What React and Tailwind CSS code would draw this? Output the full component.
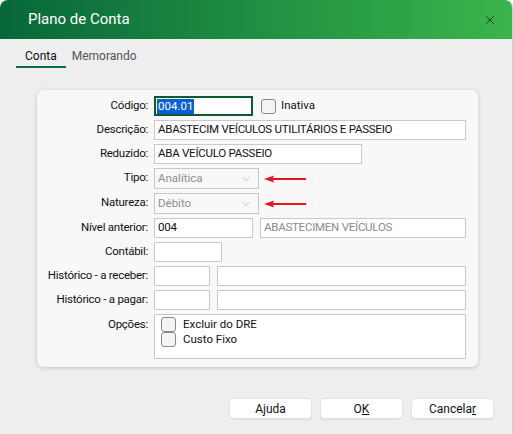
import React from 'react';
import { X, ChevronDown } from 'lucide-react';

const font = { fontFamily: 'Roboto, "Noto Sans", sans-serif' };

const Field = ({ className = '', children, gray }) => (
    <div className={`h-[20px] border border-[#c8c8c8] bg-white flex items-center px-[3px] text-[11.5px] tracking-[-0.25px] whitespace-nowrap overflow-hidden ${gray ? 'text-[#8a8a8a]' : 'text-[#111]'} ${className}`}>
        {children}
    </div>
);

const Check = () => (
    <div className="w-[15px] h-[15px] rounded-[3px] border border-[#8a8a8a] bg-[#f4f4f4] shrink-0" />
);

const Arrow = () => (
    <svg width="44" height="8" viewBox="0 0 44 8" className="ml-[5px]">
        <path d="M0 4 L10 0.5 L9 3 L42 3 L42 5 L9 5 L10 7.5 Z" fill="#e8141c" />
    </svg>
);

const Select = ({ value }) => (
    <div className="flex items-center">
        <div className="w-[105px] h-[21px] border border-[#c8c8c8] bg-[#f8f8f8] flex items-center justify-between px-[3px] text-[11.5px] text-[#8f8f8f]">
            <span>{value}</span>
            <ChevronDown size={12} strokeWidth={1.2} className="text-[#a0a0a0] mr-[3px]" />
        </div>
        <Arrow />
    </div>
);

const Label = ({ children }) => (
    <div className="h-[20px] flex items-center justify-end text-[11.5px] tracking-[-0.25px] text-[#111] whitespace-nowrap">{children}</div>
);

export default function App() {
    return (
        <div style={font} className="w-[513px] h-[434px] bg-[#eeeeee] rounded-t-[8px] overflow-hidden border-r border-[#cfcfcf] flex flex-col">
            {/* title bar */}
            <div className="h-[39px] shrink-0 bg-gradient-to-r from-[#08673a] via-[#1f8f42] to-[#3bb54a] flex items-center justify-between pl-[28px] pr-[15px]">
                <span className="text-white text-[15px]">Plano de Conta</span>
                <X size={14} strokeWidth={1.3} className="text-[#1b1b1b]" />
            </div>

            {/* tabs */}
            <div className="flex items-end pl-[16px] h-[29px] text-[12px]">
                <div className="px-[9px] pb-[1px] border-b-2 border-[#0b6b3a] text-[#111]">Conta</div>
                <div className="px-[6px] pb-[3px] text-[#555]">Memorando</div>
            </div>

            {/* panel */}
            <div className="ml-[37px] mt-[22px] w-[441px] h-[277px] bg-[#f8f8f8] rounded-[7px] shadow-[0_1px_4px_rgba(0,0,0,0.18)] pt-[6px]">
                <div className="grid grid-cols-[111px_312px] gap-x-[6px] gap-y-[4px]">
                    <Label>Código:</Label>
                    <div className="flex items-center">
                        <div className="w-[99px] h-[20px] border-2 border-[#0b5a30] bg-white flex items-center px-[1px] text-[11.5px]">
                            <span className="bg-[#0a5fd6] text-white leading-[15px] px-[1px]">004.01</span>
                        </div>
                        <div className="ml-[8px]"><Check /></div>
                        <span className="ml-[5px] text-[11.5px] text-[#111]">Inativa</span>
                    </div>

                    <Label>Descrição:</Label>
                    <Field className="w-[312px]">ABASTECIM VEÍCULOS UTILITÁRIOS E PASSEIO</Field>

                    <Label>Reduzido:</Label>
                    <Field className="w-[208px]">ABA VEÍCULO PASSEIO</Field>

                    <Label>Tipo:</Label>
                    <Select value="Analítica" />

                    <Label>Natureza:</Label>
                    <Select value="Débito" />

                    <Label>Nível anterior:</Label>
                    <div className="flex gap-[7px]">
                        <Field className="w-[99px]">004</Field>
                        <Field className="w-[206px]" gray>ABASTECIMEN VEÍCULOS</Field>
                    </div>

                    <Label>Contábil:</Label>
                    <Field className="w-[68px]" />

                    <Label>Histórico - a receber:</Label>
                    <div className="flex gap-[7px]">
                        <Field className="w-[56px]" />
                        <Field className="w-[249px]" />
                    </div>

                    <Label>Histórico - a pagar:</Label>
                    <div className="flex gap-[7px]">
                        <Field className="w-[56px]" />
                        <Field className="w-[249px]" />
                    </div>

                    <div className="flex justify-end text-[11.5px] tracking-[-0.25px] text-[#111] pt-[2px]">Opções:</div>
                    <div className="w-[312px] h-[45px] border border-[#c8c8c8] bg-white pl-[6px] pt-[2px] text-[11.5px] leading-[15px] text-[#111]">
                        <div className="flex items-center gap-[7px] h-[15px]"><Check /><span>Excluir do DRE</span></div>
                        <div className="flex items-center gap-[7px] h-[15px]"><Check /><span>Custo Fixo</span></div>
                    </div>
                </div>
            </div>

            {/* buttons */}
            <div className="flex justify-end gap-[8px] pr-[18px] mt-[31px]">
                {[['Ajuda', null], ['O', 'K'], ['Cancela', 'r']].map(([a, u]) => (
                    <button key={a} className="w-[83px] h-[21px] bg-white rounded-[4px] border border-[#e2e2e2] shadow-[0_1px_1px_rgba(0,0,0,0.06)] text-[12px] text-[#111] flex items-center justify-center">
                        {a}{u && <span className="underline">{u}</span>}
                    </button>
                ))}
            </div>
        </div>
    );
}
